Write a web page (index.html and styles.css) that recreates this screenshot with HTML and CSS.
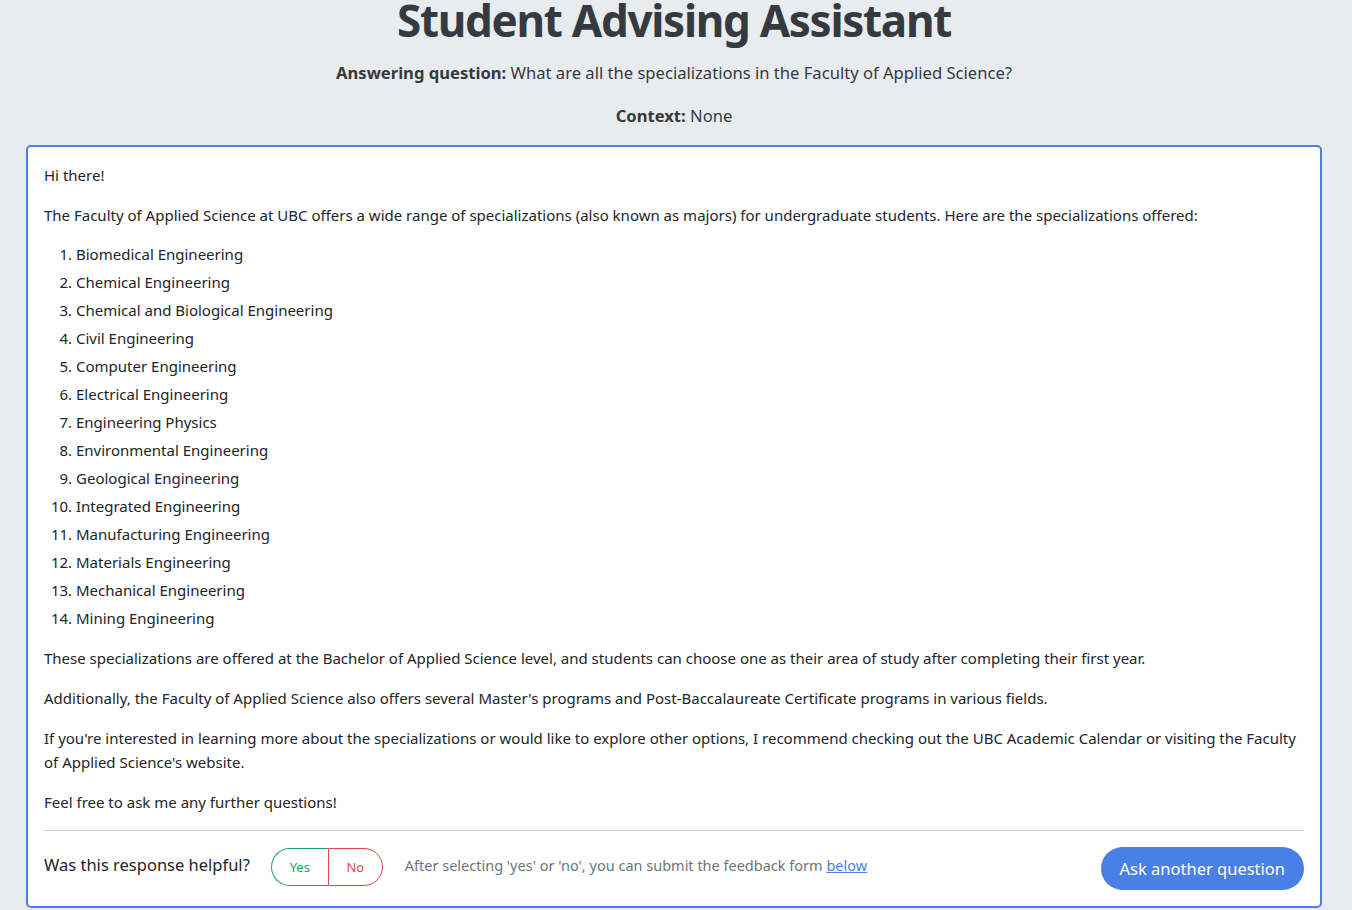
FILE: index.html
```html
<!DOCTYPE html>
<html lang="en">
<head>
<meta charset="utf-8">
<title>Student Advising Assistant</title>
<link rel="stylesheet" href="styles.css">
</head>
<body>
<div class="page">
  <h1 class="title">Student Advising Assistant</h1>
  <p class="meta"><b>Answering question:</b> What are all the specializations in the Faculty of Applied Science?</p>
  <p class="meta"><b>Context:</b> None</p>
  <div class="card">
    <div class="answer">
      <p>Hi there!</p>
      <p>The Faculty of Applied Science at UBC offers a wide range of specializations (also known as majors) for undergraduate students. Here are the specializations offered:</p>
      <ol>
        <li>Biomedical Engineering</li>
        <li>Chemical Engineering</li>
        <li>Chemical and Biological Engineering</li>
        <li>Civil Engineering</li>
        <li>Computer Engineering</li>
        <li>Electrical Engineering</li>
        <li>Engineering Physics</li>
        <li>Environmental Engineering</li>
        <li>Geological Engineering</li>
        <li>Integrated Engineering</li>
        <li>Manufacturing Engineering</li>
        <li>Materials Engineering</li>
        <li>Mechanical Engineering</li>
        <li>Mining Engineering</li>
      </ol>
      <p>These specializations are offered at the Bachelor of Applied Science level, and students can choose one as their area of study after completing their first year.</p>
      <p>Additionally, the Faculty of Applied Science also offers several Master's programs and Post-Baccalaureate Certificate programs in various fields.</p>
      <p>If you're interested in learning more about the specializations or would like to explore other options, I recommend checking out the UBC Academic Calendar or visiting the Faculty of Applied Science's website.</p>
      <p>Feel free to ask me any further questions!</p>
    </div>
    <div class="feedback">
      <span class="helpful">Was this response helpful?</span>
      <div class="btn-group">
        <button class="btn-yes">Yes</button>
        <button class="btn-no">No</button>
      </div>
      <span class="note">After selecting 'yes' or 'no', you can submit the feedback form <a href="#">below</a></span>
      <button class="ask">Ask another question</button>
    </div>
  </div>
</div>
</body>
</html>
```
FILE: styles.css
```css
* { box-sizing: border-box; }
html, body { margin: 0; padding: 0; }
body {
  background: #e9ecef;
  font-family: "Noto Sans", "Open Sans", sans-serif;
  color: #212529;
  overflow: hidden;
  height: 910px;
}
.page {
  padding: 0 30px 0 26px;
}
.title {
  margin: -6px 0 0;
  text-align: center;
  font-size: 44px;
  letter-spacing: -1.3px;
  font-weight: 700;
  line-height: 53px;
  color: #343a40;
}
.meta {
  margin: 0;
  text-align: center;
  font-size: 16.6px;
  line-height: 24px;
  color: #343a40;
}
.meta:first-of-type { margin-top: 14px; }
.meta + .meta { margin-top: 19px; }
.meta b { font-weight: 700; }
.card {
  margin-top: 17px;
  background: #fff;
  border: 2px solid #4a80e6;
  border-radius: 5px;
  padding: 16px 16px 18px 16px;
}
.answer {
  font-size: 15px;
  line-height: 24px;
  color: #212529;
}
.answer p { margin: 0 0 16px; }
.answer ol {
  margin: -3px 0 14px;
  padding-left: 32px;
  font-size: 15px;
  line-height: 28px;
}
.feedback {
  border-top: 1px solid #d4d4d4;
  margin-top: 11px;
  padding-top: 14px;
  display: flex;
  align-items: center;
}
.helpful {
  font-size: 16.5px;
  color: #212529;
  margin-right: 21px;
  position: relative;
  top: -2px;
}
.btn-group {
  display: flex;
  height: 38px;
}
.btn-group button {
  font-family: inherit;
  font-size: 13px;
  background: #fff;
  height: 38px;
  padding: 0;
  cursor: pointer;
}
.btn-yes {
  width: 57px;
  color: #1aa06d;
  border: 1px solid #1aa06d;
  border-right: none;
  border-radius: 19px 0 0 19px;
}
.btn-no {
  width: 55px;
  color: #dc4b4b;
  border: 1px solid #dc4b4b;
  border-radius: 0 19px 19px 0;
}
.note {
  margin-left: 22px;
  font-size: 14.5px;
  color: #6c757d;
  flex: 1;
  position: relative;
  top: -2px;
}
.note a { color: #4a80e6; }
.ask {
  font-family: inherit;
  background: #4a80e6;
  color: #fff;
  border: none;
  border-radius: 22px;
  height: 43px;
  padding: 0 19px;
  font-size: 16.5px;
  cursor: pointer;
  position: relative;
  top: 2px;
}
```
